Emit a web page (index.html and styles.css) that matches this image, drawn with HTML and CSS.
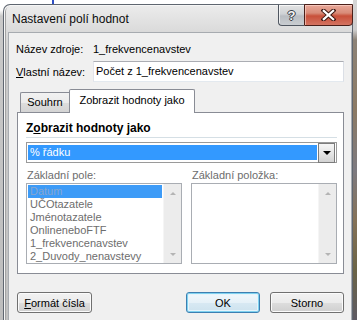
FILE: index.html
```html
<!DOCTYPE html>
<html lang="cs">
<head>
    <meta charset="UTF-8">
    <meta name="viewport" content="width=device-width, initial-scale=1.0">
    <title>Nastavení polí hodnot</title>
    <link rel="stylesheet" href="styles.css">
</head>
<body>
    <div class="edge-left"></div>

    <div class="window">
        <div class="titlebar">
            <span class="title">Nastavení polí hodnot</span>
            <div class="caption-buttons">
                <span class="cap-btn cap-help">?</span>
                <span class="cap-btn cap-close">
                    <svg width="15" height="12" viewBox="0 0 15 12">
                        <path d="M2.5 1.5 L12.5 10.5 M12.5 1.5 L2.5 10.5" stroke="#3b1712" stroke-width="4.2" stroke-linecap="square" fill="none"/>
                        <path d="M2.8 1.8 L12.2 10.2 M12.2 1.8 L2.8 10.2" stroke="#ffffff" stroke-width="2.2" stroke-linecap="square" fill="none"/>
                    </svg>
                </span>
            </div>
        </div>

        <div class="client">
            <div class="field-row">
                <span class="field-label">Název zdroje:</span>
                <span class="field-value">1_frekvencenavstev</span>
            </div>
            <div class="field-row field-row-input">
                <span class="field-label"><u>V</u>lastní název:</span>
                <div class="textbox">Počet z 1_frekvencenavstev</div>
            </div>

            <div class="tabs">
                <div class="tab">Souhrn</div>
                <div class="tab active">Zobrazit hodnoty jako</div>
            </div>
            <div class="tab-panel">
                <div class="group-title">Z<u>o</u>brazit hodnoty jako</div>

                <div class="combo">
                    <span class="combo-value">% řádku</span>
                    <span class="combo-btn"><span class="combo-arrow"></span></span>
                </div>

                <div class="lists">
                    <div class="list-col">
                        <div class="list-label">Základní pole:</div>
                        <div class="listbox">
                            <ul class="list-items">
                                <li class="selected">Datum</li>
                                <li>UČOtazatele</li>
                                <li>Jménotazatele</li>
                                <li>OnlineneboFTF</li>
                                <li>1_frekvencenavstev</li>
                                <li>2_Duvody_nenavstevy</li>
                            </ul>
                            <div class="scrollbar">
                                <span class="arrow-up"></span>
                                <span class="arrow-down"></span>
                            </div>
                        </div>
                    </div>
                    <div class="list-col">
                        <div class="list-label">Základní položka:</div>
                        <div class="listbox">
                            <ul class="list-items"></ul>
                            <div class="scrollbar">
                                <span class="arrow-up"></span>
                                <span class="arrow-down"></span>
                            </div>
                        </div>
                    </div>
                </div>
            </div>

            <div class="buttons">
                <button class="btn btn-format"><u>F</u>ormát čísla</button>
                <button class="btn btn-default">OK</button>
                <button class="btn">Storno</button>
            </div>
        </div>
    </div>

    <div class="edge-right"></div>
</body>
</html>
```

FILE: styles.css
```css
body {
    margin: 0;
    width: 357px;
    height: 320px;
    overflow: hidden;
    display: flex;
    align-items: stretch;
    font-family: "Liberation Sans", Arial, sans-serif;
    font-size: 11px;
    color: #000;
    background:
        linear-gradient(to right, transparent 52px, #2f4fc4 52px, #2f4fc4 54px, transparent 54px) 0 0 / 100% 4px no-repeat,
        #ffffff;
}

.edge-left {
    width: 3px;
    flex-shrink: 0;
    background: linear-gradient(to bottom, #ffffff 0, #ffffff 10px, #c9c9c9 16px, #bdbdbd 100%);
}

.edge-right {
    width: 4px;
    flex-shrink: 0;
    background: linear-gradient(to bottom, #d6d6d6 0, #cdcdcd 30px, #8d8377 40px, #8c7a64 110px, #7d7a80 170px, #857258 220px, #6b6446 270px, #5d5a63 320px);
}

/* window frame */
.window {
    width: 348px;
    flex-shrink: 0;
    margin-top: 4px;
    border: 1px solid #5f6670;
    border-bottom: none;
    border-radius: 7px 7px 0 0;
    background: linear-gradient(to bottom, #ececec 0, #dadada 27px, #cbcbcb 60px, #c1c1c1 100%);
    box-shadow: inset 1px 1px 0 #f6f6f6, inset 2px 0 0 #a3a3a3;
    display: flex;
    flex-direction: column;
}

.titlebar {
    height: 27px;
    display: flex;
    align-items: flex-start;
}

.title {
    padding: 7px 0 0 8px;
    font-size: 12px;
    line-height: 15px;
    color: #0c0c0c;
}

.caption-buttons {
    margin: -1px -1px 0 auto;
    display: flex;
}

.cap-btn {
    height: 20px;
    display: flex;
    justify-content: center;
    align-items: center;
    border: 1px solid #4f5660;
    border-top-color: #6d737b;
}

.cap-help {
    width: 25px;
    border-right: none;
    border-radius: 0 0 0 4px;
    background: linear-gradient(to bottom, #e4e4e4 0, #cfd2d5 45%, #b9bdc2 55%, #c9cdd1 100%);
    box-shadow: inset 1px 1px 0 rgba(255, 255, 255, 0.7);
    font-weight: bold;
    font-size: 13px;
    color: #f4f4f4;
    text-shadow: 0 0 1px #3a4048, 1px 0 0 #3a4048, -1px 0 0 #3a4048, 0 1px 0 #3a4048, 0 -1px 0 #3a4048;
}

.cap-close {
    width: 47px;
    border-color: #4a1f19;
    border-radius: 0 0 4px 0;
    background: linear-gradient(to bottom, #e9a899 0, #d88c79 40%, #c8503a 55%, #d47462 100%);
    box-shadow: inset 1px 1px 0 rgba(255, 220, 210, 0.6);
}

/* dialog body */
.client {
    flex: 1;
    margin-left: 4px;
    padding: 6px 7px 0 7px;
    border: 1px solid #a7abb0;
    border-bottom: none;
    background: #f0f0f0;
}

.field-row {
    height: 20px;
    display: flex;
    align-items: center;
}

.field-row-input {
    height: 21px;
    margin-top: 2px;
}

.field-label {
    width: 77px;
    flex-shrink: 0;
}

.textbox {
    flex: 1;
    height: 19px;
    line-height: 19px;
    padding-left: 2px;
    background: #fff;
    border: 1px solid #abadb3;
    border-left-color: #e2e3ea;
    border-right-color: #dbdfe6;
    border-bottom-color: #e3e9ef;
}

/* tabs */
.tabs {
    height: 23px;
    margin: 8px 0 -1px 4px;
    display: flex;
    align-items: flex-end;
    position: relative;
    z-index: 1;
}

.tab {
    height: 19px;
    width: 48px;
    margin-bottom: 1px;
    line-height: 19px;
    text-align: center;
    border: 1px solid #898c95;
    border-right: none;
    border-bottom: none;
    border-radius: 2px 0 0 0;
    background: linear-gradient(to bottom, #f2f2f2 0, #ebebeb 50%, #dddddd 51%, #d4d4d4 100%);
}

.tab.active {
    height: 21px;
    width: 124px;
    margin-bottom: 0;
    padding-top: 2px;
    line-height: 17px;
    border-right: 1px solid #898c95;
    border-radius: 2px 2px 0 0;
    background: #fff;
}

.tab-panel {
    margin-left: 1px;
    padding: 7px 6px 9px 8px;
    border: 1px solid #898c95;
    background: #fff;
}

.group-title {
    font-size: 12px;
    font-weight: bold;
    line-height: 17px;
    border-bottom: 1px solid #d5dfe5;
}

/* combo box */
.combo {
    height: 19px;
    margin-top: 4px;
    padding: 0 1px;
    display: flex;
    align-items: center;
    border: 1px solid #9a9a9a;
    background: #fff;
}

.combo-value {
    flex: 1;
    height: 15px;
    line-height: 15px;
    padding-left: 2px;
    margin-right: 1px;
    color: #fff;
    background: #3399ff;
}

.combo-btn {
    width: 15px;
    height: 18px;
    display: flex;
    justify-content: center;
    align-items: center;
    border: 1px solid #7c7c7c;
    background: linear-gradient(to bottom, #f6f6f6 0, #e6e6e6 50%, #d2d2d2 100%);
}

.combo-arrow {
    width: 0;
    height: 0;
    border-left: 4px solid transparent;
    border-right: 4px solid transparent;
    border-top: 4px solid #000;
}

/* lists */
.lists {
    margin-top: 4px;
    display: grid;
    grid-template-columns: 156px 1fr;
    gap: 9px;
}

.list-label {
    line-height: 16px;
    padding-left: 1px;
    color: #6d6d6d;
}

.listbox {
    height: 79px;
    display: flex;
    border: 1px solid #a9adb3;
    background: #fff;
}

.list-items {
    flex: 1;
    margin: 0;
    padding: 1px 1px 0 1px;
    list-style: none;
    overflow: hidden;
}

.list-items li {
    height: 13px;
    line-height: 13px;
    padding-left: 2px;
    color: #6d6d6d;
    white-space: nowrap;
}

.list-items li.selected {
    color: #86a5cf;
    background: #3d9bf7;
}

.scrollbar {
    width: 17px;
    flex-shrink: 0;
    padding: 8px 0 7px;
    display: flex;
    flex-direction: column;
    justify-content: space-between;
    align-items: center;
    background: #ececec;
    border-left: 1px solid #f5f5f5;
}

.arrow-up,
.arrow-down {
    width: 0;
    height: 0;
    border-left: 3px solid transparent;
    border-right: 3px solid transparent;
}

.arrow-up {
    border-bottom: 3px solid #b4b4b4;
}

.arrow-down {
    border-top: 3px solid #b4b4b4;
}

/* bottom buttons */
.buttons {
    margin: 18px 0 0 1px;
    display: flex;
    gap: 10px;
}

.btn {
    width: 74px;
    height: 21px;
    padding: 0;
    font-family: "Liberation Sans", Arial, sans-serif;
    font-size: 11px;
    font-weight: normal;
    color: #000;
    border: 1px solid #707070;
    border-radius: 3px;
    background: linear-gradient(to bottom, #f2f2f2 0, #ebebeb 50%, #dddddd 51%, #cfcfcf 100%);
    box-shadow: inset 0 0 0 1px #fbfbfb;
}

.btn-format {
    width: 75px;
    margin-right: auto;
}

.btn-default {
    border-color: #3c7fb1;
    background: linear-gradient(to bottom, #f1f8fc 0, #e6f1f8 50%, #d8e9f3 51%, #cde2ee 100%);
    box-shadow: inset 0 0 0 1px #7fd2f0, inset 0 0 0 2px #e6f4fb;
}
```
